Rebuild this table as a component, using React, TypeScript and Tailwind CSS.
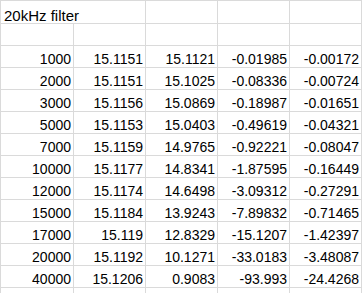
import React from "react";

const rows: string[][] = [
  ["1000", "15.1151", "15.1121", "-0.01985", "-0.00172"],
  ["2000", "15.1151", "15.1025", "-0.08336", "-0.00724"],
  ["3000", "15.1156", "15.0869", "-0.18987", "-0.01651"],
  ["5000", "15.1153", "15.0403", "-0.49619", "-0.04321"],
  ["7000", "15.1159", "14.9765", "-0.92221", "-0.08047"],
  ["10000", "15.1177", "14.8341", "-1.87595", "-0.16449"],
  ["12000", "15.1174", "14.6498", "-3.09312", "-0.27291"],
  ["15000", "15.1184", "13.9243", "-7.89832", "-0.71465"],
  ["17000", "15.119", "12.8329", "-15.1207", "-1.42397"],
  ["20000", "15.1192", "10.1271", "-33.0183", "-3.48087"],
  ["40000", "15.1206", "0.9083", "-93.993", "-24.4268"],
];

const cell = "border-r border-b border-[#dadada] flex items-end justify-end pr-[2px] leading-[16px]";

export default function App() {
  return (
    <div className="w-[362px] h-[293px] overflow-hidden bg-white text-black text-[14px] font-['Liberation_Sans',Arial,sans-serif]">
      <div className="grid grid-cols-[73px_72px_72px_72px_72px] border-l border-t border-[#dadada] w-[362px]">
        {/* title row: text spills into column B */}
        <div className="col-span-2 h-[23px] border-r border-b border-[#dadada] flex items-end pl-[3px] text-[15px] leading-[15px]">
          20kHz filter
        </div>
        <div className="h-[23px] border-r border-b border-[#dadada]" />
        <div className="h-[23px] border-r border-b border-[#dadada]" />
        <div className="h-[23px] border-r border-b border-[#dadada]" />

        {/* empty row */}
        {[0, 1, 2, 3, 4].map((i) => (
          <div key={"e" + i} className="h-[22px] border-r border-b border-[#dadada]" />
        ))}

        {rows.map((r, ri) =>
          r.map((v, ci) => (
            <div key={ri + "-" + ci} className={`h-[22px] ${cell}`}>
              {v}
            </div>
          ))
        )}

        {[0, 1, 2, 3, 4].map((i) => (
          <div key={"t" + i} className="h-[22px] border-r border-[#dadada]" />
        ))}
      </div>
    </div>
  );
}
